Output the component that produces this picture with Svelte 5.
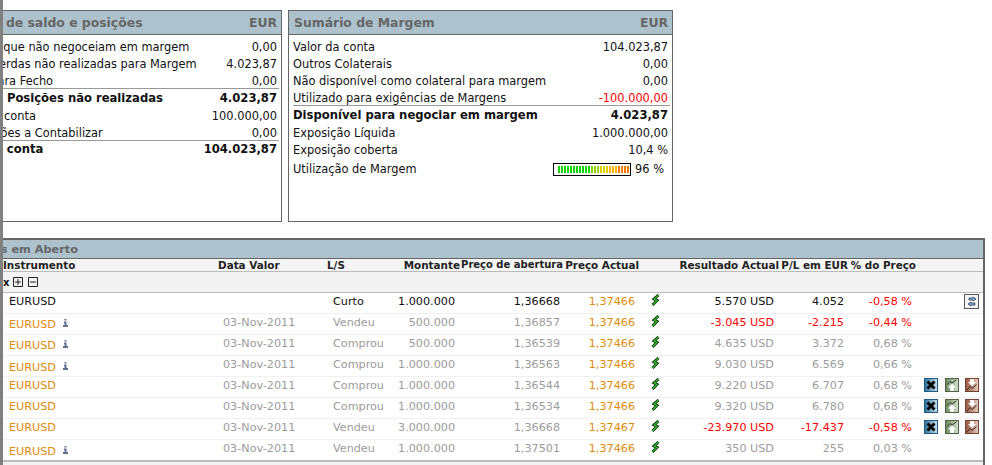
<script>
  const balance = [
    { label: 'Posições que não negoceiam em margem', value: '0,00' },
    { label: 'Lucros/perdas não realizadas para Margem', value: '4.023,87' },
    { label: 'Ajuste para Fecho', value: '0,00' },
    { label: 'Total de Posições não realizadas', value: '4.023,87', total: true },
    { label: 'Saldo da conta', value: '100.000,00' },
    { label: 'Transacções a Contabilizar', value: '0,00' },
    { label: 'Total da conta', value: '104.023,87', total: true },
  ];

  const margin = [
    { label: 'Valor da conta', value: '104.023,87' },
    { label: 'Outros Colaterais', value: '0,00' },
    { label: 'Não disponível como colateral para margem', value: '0,00' },
    { label: 'Utilizado para exigências de Margens', value: '-100.000,00', neg: true },
    { label: 'Disponível para negociar em margem', value: '4.023,87', total: true },
    { label: 'Exposição Líquida', value: '1.000.000,00' },
    { label: 'Exposição coberta', value: '10,4 %' },
  ];

  const positions = [
    { info: true, side: 'Vendeu', amount: '500.000', open: '1,36857', now: '1,37466', result: '-3.045 USD', pl: '-2.215', pct: '-0,44 %', loss: true },
    { info: true, side: 'Comprou', amount: '500.000', open: '1,36539', now: '1,37466', result: '4.635 USD', pl: '3.372', pct: '0,68 %' },
    { info: true, drop: true, side: 'Comprou', amount: '1.000.000', open: '1,36563', now: '1,37466', result: '9.030 USD', pl: '6.569', pct: '0,66 %' },
    { side: 'Comprou', amount: '1.000.000', open: '1,36544', now: '1,37466', result: '9.220 USD', pl: '6.707', pct: '0,68 %', actions: true },
    { side: 'Comprou', amount: '1.000.000', open: '1,36534', now: '1,37466', result: '9.320 USD', pl: '6.780', pct: '0,68 %', actions: true },
    { side: 'Vendeu', amount: '3.000.000', open: '1,36668', now: '1,37467', result: '-23.970 USD', pl: '-17.437', pct: '-0,58 %', loss: true, actions: true },
    { info: true, drop: true, side: 'Vendeu', amount: '1.000.000', open: '1,37501', now: '1,37466', result: '350 USD', pl: '255', pct: '0,03 %' },
  ];

  function barColour(i) {
    if (i < 11) return '#10d400';
    if (i < 14) return '#8fd000';
    if (i < 17) return '#e0d000';
    if (i < 20) return '#ffb400';
    return '#ff7a00';
  }
  const bars = Array.from({ length: 24 }, (_, i) => barColour(i));
</script>

{#snippet bolt()}
  <svg class="bolt" width="9" height="12" viewBox="0 0 9 12">
    <path d="M7.500 1L3 5 6 6.500 1.500 11" fill="none" stroke="#0c1c0c" stroke-width="2.800" />
    <path d="M7.500 1L3 5 6 6.500 1.500 11" fill="none" stroke="#2fd028" stroke-width="1.100" />
  </svg>
{/snippet}

{#snippet info()}
  <svg class="info" width="5" height="8" viewBox="0 0 5 8">
    <path d="M1.500 0h2v1.500h-2zM1 2.500h2.500v3.500h1.500v2h-5v-2h1.500v-2h-.5z" fill="#5f6f8f" />
  </svg>
{/snippet}

<div class="pane">
  <div class="content">
    <div class="summaries">
      <section class="panel balance">
        <header><span class="clipped">Resumo de saldo e posições</span><span>EUR</span></header>
        <div class="rows">
          {#each balance as row}
            <div class="line" class:total={row.total}>
              <span>{row.label}</span><span>{row.value}</span>
            </div>
          {/each}
        </div>
      </section>

      <section class="panel">
        <header><span>Sumário de Margem</span><span>EUR</span></header>
        <div class="rows">
          {#each margin as row}
            <div class="line" class:total={row.total} class:neg={row.neg}>
              <span>{row.label}</span><span>{row.value}</span>
            </div>
          {/each}
          <div class="line gauge-line">
            <span>Utilização de Margem</span>
            <span class="gauge-wrap">
              <span class="gauge">
                {#each bars as colour}
                  <i style="background: {colour}"></i>
                {/each}
              </span>
              96 %
            </span>
          </div>
        </div>
      </section>
    </div>

    <section class="table">
      <div class="title">Posições em Aberto</div>
      <div class="grid heads">
        <span>Instrumento</span>
        <span>Data Valor</span>
        <span>L/S</span>
        <span class="r flush">Montante</span>
        <span class="r wide">Preço de abertura</span>
        <span class="r">Preço Actual</span>
        <span></span>
        <span class="r flush">Resultado Actual</span>
        <span class="r">P/L em EUR</span>
        <span class="r">% do Preço</span>
      </div>
      <div class="tools">
        <b>x</b>
        <svg width="10" height="10" viewBox="0 0 10 10"><path d="M.5 .5h9v9h-9zM2 5h6M5 2v6" fill="none" stroke="#222" /></svg>
        <svg width="10" height="10" viewBox="0 0 10 10"><path d="M.5 .5h9v9h-9zM2 5h6" fill="none" stroke="#222" /></svg>
      </div>

      <div class="grid row parent">
        <span class="cell name">EURUSD</span>
        <span class="cell date"></span>
        <span class="cell">Curto</span>
        <span class="cell r">1.000.000</span>
        <span class="cell r">1,36668</span>
        <span class="cell r now">1,37466</span>
        <span class="cell boltcell">{@render bolt()}</span>
        <span class="cell r">5.570 USD</span>
        <span class="cell r">4.052</span>
        <span class="cell r red">-0,58 %</span>
        <span class="cell acts">
          <button class="swap" aria-label="swap">
            <svg width="10" height="11" viewBox="0 0 10 11">
              <path d="M6 1L9 3 6 5V4H2V2h4z" fill="#7db8e6" stroke="#223" stroke-width=".7" />
              <path d="M4 6L1 8 4 10V9h4V7H4z" fill="#7db8e6" stroke="#223" stroke-width=".7" />
            </svg>
          </button>
        </span>
      </div>

      {#each positions as p}
        <div class="grid row child">
          <span class="cell name" class:lower={p.info} class:drop={p.drop}>EURUSD {#if p.info}{@render info()}{/if}</span>
          <span class="cell date">03-Nov-2011</span>
          <span class="cell">{p.side}</span>
          <span class="cell r">{p.amount}</span>
          <span class="cell r">{p.open}</span>
          <span class="cell r now">{p.now}</span>
          <span class="cell boltcell">{@render bolt()}</span>
          <span class="cell r" class:red={p.loss}>{p.result}</span>
          <span class="cell r" class:red={p.loss}>{p.pl}</span>
          <span class="cell r" class:red={p.loss}>{p.pct}</span>
          <span class="cell acts">
            {#if p.actions}
              <svg class="act" width="14" height="14" viewBox="0 0 14 14">
                <defs><linearGradient id="blue" x1="0" x2="1"><stop offset="0" stop-color="#2a6f9c" /><stop offset="1" stop-color="#cfe0ea" /></linearGradient></defs>
                <rect x=".5" y=".5" width="13" height="13" fill="url(#blue)" stroke="#1f5c85" />
                <path d="M3.500 3.500L10.500 10.500M10.500 3.500L3.500 10.500" stroke="#000" stroke-width="2.800" />
              </svg>
              <svg class="act" width="14" height="14" viewBox="0 0 14 14">
                <defs><linearGradient id="green" x1="0" x2="1"><stop offset="0" stop-color="#6d8a60" /><stop offset="1" stop-color="#d5dfcd" /></linearGradient></defs>
                <rect x=".5" y=".5" width="13" height="13" fill="url(#green)" stroke="#4b6340" />
                <path d="M2 6.500L5 3.500 7 5 11.500 1.800" fill="none" stroke="#2c3a26" />
                <path d="M7 5.500L11 9.500H8.800V13H5.200V9.500H3z" fill="#fff" />
              </svg>
              <svg class="act" width="14" height="14" viewBox="0 0 14 14">
                <defs><linearGradient id="brown" x1="0" x2="1"><stop offset="0" stop-color="#96553e" /><stop offset="1" stop-color="#e6cfc5" /></linearGradient></defs>
                <rect x=".5" y=".5" width="13" height="13" fill="url(#brown)" stroke="#75402c" />
                <path d="M5.200 1H8.800V4H11L7 8 3 4H5.200z" fill="#fff" />
                <path d="M2 12L5 8.500 7 10.500 11.500 6.500" fill="none" stroke="#3a2118" />
              </svg>
            {/if}
          </span>
        </div>
      {/each}
      <div class="foot"></div>
    </section>
  </div>
</div>

<style>
  :global(body) {
    background: #fff;
    overflow: hidden;
  }

  .pane {
    height: 465px;
    width: 992px;
    box-sizing: border-box;
    border-left: 3px solid #808080;
    overflow: hidden;
    font-family: 'DejaVu Sans', Verdana, sans-serif;
    font-size: 11.4px;
    color: #111;
  }

  .content {
    padding-top: 10px;
  }

  .summaries {
    display: flex;
    gap: 6px;
    height: 228px;
    margin-left: -55px;
  }

  .panel {
    width: 385px;
    height: 212px;
    box-sizing: border-box;
    border: 1px solid #666;
  }

  .panel.balance {
    width: 334px;
  }

  .panel header {
    display: flex;
    justify-content: space-between;
    height: 23px;
    padding: 0 4px 0 5px;
    background: #adc2cc;
    border-bottom: 1px solid #666;
    font-size: 12.4px;
    font-weight: bold;
    line-height: 24px;
    color: #666;
  }

  .clipped {
    margin-left: -8px;
  }

  .rows {
    padding: 3px 4px 0;
  }

  .balance .rows {
    padding-left: 2px;
  }

  .line {
    display: flex;
    justify-content: space-between;
    height: 17px;
    line-height: 18px;
  }

  .line.total {
    height: 18px;
    line-height: 18px;
    margin: -1px -2px 0 0;
    padding-right: 2px;
    border-top: 1px solid #999;
    font-size: 11.6px;
    font-weight: bold;
  }

  .balance .line.total:last-child {
    height: 16px;
    line-height: 16px;
  }

  .line.neg span:last-child,
  .red {
    color: #f00;
  }

  .gauge-line {
    height: 20px;
    line-height: 20px;
    margin-top: 1px;
    padding-right: 4px;
  }

  .gauge-wrap {
    display: flex;
    align-items: center;
    gap: 4px;
  }

  .gauge {
    display: flex;
    gap: 1px;
    width: 78px;
    height: 13px;
    box-sizing: border-box;
    padding: 2px 1px 2px 4px;
    border: 1px solid #000;
  }

  .gauge i {
    width: 2px;
    height: 7px;
    flex: none;
  }

  .table {
    width: 982px;
    box-sizing: border-box;
    height: 227px;
    border-top: 2px solid #666;
    border-right: 2px solid #666;
    background: #f3f3f3;
  }

  .title {
    height: 18px;
    margin-left: -51px;
    background: #adc2cc;
    border-bottom: 1px solid #666;
    font-size: 11.3px;
    font-weight: bold;
    line-height: 20px;
    color: #666;
  }

  .grid {
    display: grid;
    grid-template-columns: 215px 109px 60px 73px 105px 75px 30px 109px 70px 68px 1fr;
  }

  .heads {
    height: 12px;
    border-bottom: 1px solid #bbb;
    background: #f5f5f5;
    font-size: 10.4px;
    font-weight: bold;
    line-height: 12px;
    white-space: nowrap;
    color: #222;
  }

  .heads .r {
    padding-right: 1px;
    text-align: right;
  }

  .heads .flush {
    padding-right: 0;
  }

  .heads .wide {
    padding-right: 2px;
    font-size: 10px;
  }

  .tools {
    display: flex;
    align-items: center;
    height: 20px;
    border-bottom: 1px solid #bbb;
    background: #f3f3f3;
    font-size: 10px;
  }

  .tools b {
    width: 10px;
  }

  .tools svg {
    margin-right: 5px;
  }

  .row {
    height: 21px;
    box-sizing: border-box;
    background: #fff;
    border-bottom: 1px solid #f0f0f0;
    font-size: 11.2px;
    line-height: 18px;
    white-space: nowrap;
  }

  .child {
    color: #9c9c9c;
  }

  .cell {
    padding: 0 5px 0 6px;
    overflow: hidden;
  }

  .cell.r {
    text-align: right;
  }

  .cell.date {
    padding-left: 5px;
  }

  .name {
    color: #111;
  }

  .child .name {
    color: #dd8c0c;
  }

  .name.lower {
    padding-top: 2px;
  }

  .name.drop {
    padding-top: 3px;
  }

  .info {
    margin-left: 3px;
    vertical-align: 1px;
  }

  .cell.now {
    color: #dd8c0c;
  }

  .boltcell {
    padding-left: 11px;
  }

  .bolt {
    vertical-align: -1px;
  }

  .acts {
    display: flex;
    align-items: center;
    gap: 6.500px;
    padding: 0 0 4px 7px;
  }

  .act {
    flex: none;
  }

  .swap {
    display: flex;
    align-items: center;
    justify-content: center;
    width: 15px;
    height: 15px;
    margin-left: 40px;
    padding: 0;
    background: #f4f4f4;
    border: 1px solid #556;
  }

  .foot {
    height: 5px;
    margin-top: -1px;
    border-top: 2px solid #bbb;
    background: #f3f3f3;
  }
</style>
